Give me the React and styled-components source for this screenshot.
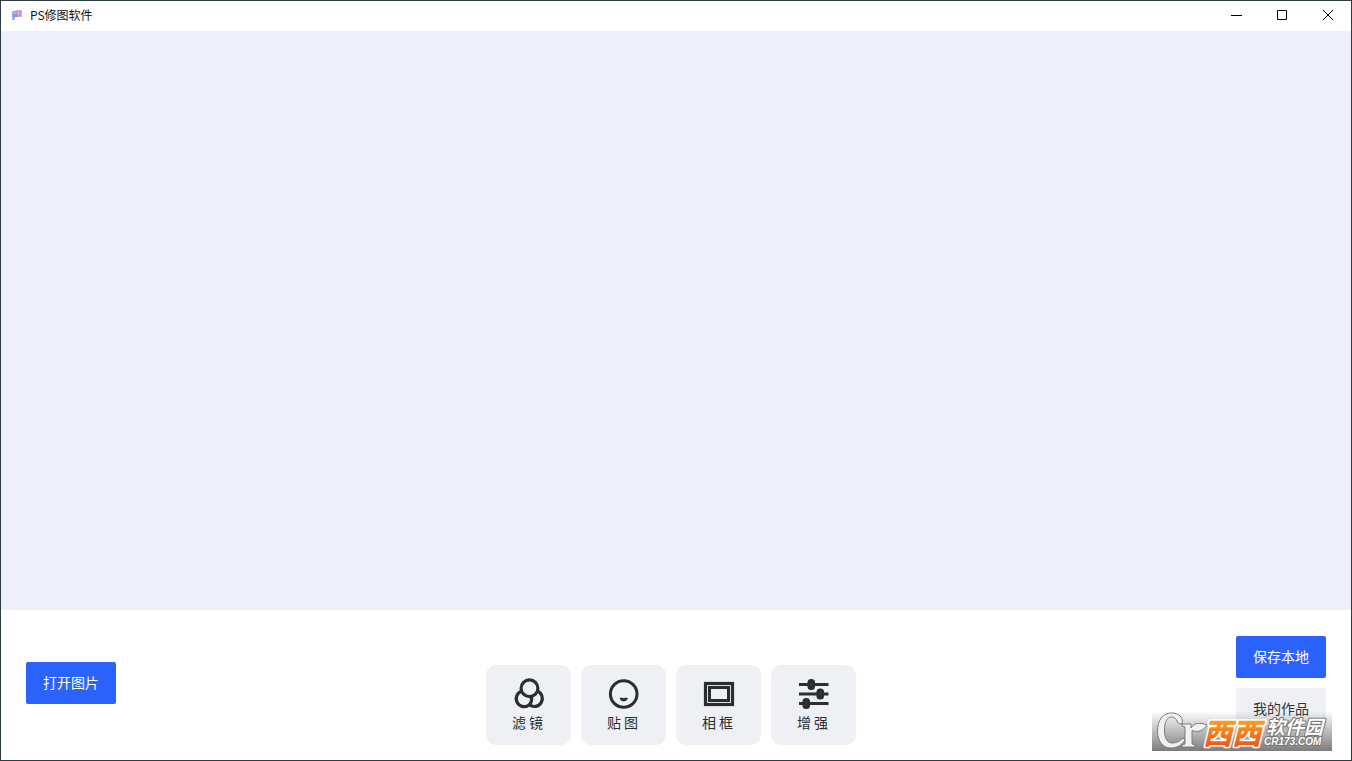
import React from "react";
import styled, { createGlobalStyle } from "styled-components";

const GlobalStyle = createGlobalStyle`
  * { box-sizing: border-box; }
  body { margin: 0; }
  body, button {
    font-family: "Noto Sans CJK SC", sans-serif;
  }
`;

const Window = styled.div`
  position: relative;
  display: flex;
  flex-direction: column;
  min-height: 100vh;
  border: 1px solid #2b3d40;
  background: #fff;
`;

const TitleBar = styled.header`
  display: flex;
  align-items: center;
  height: 30px;
  padding: 0 0 2px 10px;
`;

const Title = styled.h1`
  flex: 1;
  margin: 0 0 0 7px;
  font-size: 12px;
  line-height: 18px;
  font-weight: 400;
  color: #111;
`;

const CaptionButton = styled.button`
  display: flex;
  align-items: center;
  justify-content: center;
  width: 46px;
  height: 28px;
  padding: 0;
  border: 0;
  background: none;
`;

const Stage = styled.main`
  flex: 1;
  background: #efeff9;
`;

const Footer = styled.footer`
  display: grid;
  grid-template-columns: 1fr auto 1fr;
  height: 150px;
  padding: 0 25px;
`;

const Side = styled.div`
  display: flex;
  flex-direction: column;
  justify-content: center;
  align-items: ${(p) => (p.$end ? "flex-end" : "flex-start")};
  gap: 10px;
  padding-bottom: 4px;
`;

const ActionButton = styled.button`
  width: 90px;
  height: 42px;
  padding: 0 0 2px;
  border: 0;
  border-radius: 2px;
  font-size: 14px;
  line-height: 20px;
  color: ${(p) => (p.$primary ? "#fff" : "#333")};
  background: ${(p) => (p.$primary ? "#2b62fb" : "#eff0f3")};
`;

const Tools = styled.nav`
  display: flex;
  align-items: flex-end;
  gap: 10px;
  padding: 0 10px 15px 0;
`;

const ToolButton = styled.button`
  display: flex;
  flex-direction: column;
  align-items: center;
  width: 85px;
  height: 80px;
  padding: 13px 0 0;
  border: 0;
  border-radius: 10px;
  background: #eff0f3;
  color: #2a2c30;
  font-size: 14px;
  line-height: 20px;
`;

const ToolIcon = styled.svg`
  width: 32px;
  height: 32px;
  margin-bottom: 2px;
`;

const ToolLabel = styled.span`
  padding-right: 2px;
`;

const Brand = styled.div`
  position: absolute;
  right: 19px;
  bottom: 9px;
  width: 180px;
  height: 40px;
  background: linear-gradient(rgba(110, 110, 110, 0), rgba(110, 110, 110, 0.9));
`;

const BrandArt = styled.svg`
  display: block;
  width: 180px;
  height: 40px;

  text {
    font-style: italic;
    paint-order: stroke;
    stroke-linejoin: round;
  }
`;

const stroke = { fill: "none", stroke: "#2b2d30", strokeWidth: 3 };

const tools = [
  {
    name: "滤 镜",
    icon: (
      <g {...stroke} strokeWidth="3.2">
        <path d="M8.4 13.2A8 8 0 1 0 16.400 26.800C18.200 25 19 22.500 18.600 19" />
        <path d="M24.600 13.2A8 8 0 1 1 16.400 26.800" />
        <circle cx="16.500" cy="10.300" r="8.4" />
      </g>
    ),
  },
  {
    name: "贴 图",
    icon: (
      <g {...stroke}>
        <circle cx="15.700" cy="16" r="13.3" />
        <path
          d="M12 20.200Q14 19.800 15.700 20.600Q17.500 19.800 19.500 20.200Q18.700 23 15.700 23Q12.700 23 12 20.200Z"
          fill="#2b2d30"
          strokeWidth="0.8"
          strokeLinejoin="round"
        />
      </g>
    ),
  },
  {
    name: "相 框",
    icon: (
      <g {...stroke}>
        <rect x="2.500" y="5.500" width="27" height="21" strokeWidth="3.200" />
        <rect x="6.500" y="9.500" width="19" height="13" />
      </g>
    ),
  },
  {
    name: "增 强",
    icon: (
      <g {...stroke}>
        <path d="M1 6.500h29.500M1 16h29.500M1 25.500h29.500" />
        <g fill="#2b2d30" stroke="none">
          <rect x="9.500" y="1" width="7.500" height="11" rx="3.5" />
          <rect x="18.500" y="10.500" width="7.500" height="11" rx="3.5" />
          <rect x="4.500" y="20" width="7.500" height="11" rx="3.5" />
        </g>
        <path d="M13.250 5.500v2M22.250 15v2M8.250 24.500v2" stroke="#45474b" strokeWidth="1" />
      </g>
    ),
  },
];

export default function App() {
  return (
    <Window>
      <GlobalStyle />
      <TitleBar>
        <svg width="12" height="12" viewBox="0 0 12 12" aria-hidden="true">
          <rect x="1" y="2" width="3" height="3" rx="1" fill="#a9a3e0" />
          <rect x="4" y="1" width="3" height="4" rx="1" fill="#c59bdc" />
          <rect x="7" y="1" width="4" height="4" rx="1.5" fill="#dc92c8" />
          <rect x="1" y="5" width="3" height="3" fill="#8f9be4" />
          <rect x="4" y="5" width="3" height="3" fill="#9c88d6" />
          <rect x="7" y="5" width="4" height="3" rx="1.5" fill="#c88fd6" />
          <rect x="1" y="8" width="3" height="3" rx="1" fill="#78bdea" />
        </svg>
        <Title>PS修图软件</Title>
        <CaptionButton aria-label="最小化">
          <svg width="12" height="12" stroke="#000" fill="none"><path d="M1 6.500h11" /></svg>
        </CaptionButton>
        <CaptionButton aria-label="最大化">
          <svg width="12" height="12" stroke="#000" fill="none"><path d="M1.500 1.500h9v9h-9z" /></svg>
        </CaptionButton>
        <CaptionButton aria-label="关闭">
          <svg width="12" height="12" stroke="#000" fill="none"><path d="M1 1l10 10M11 1L1 11" /></svg>
        </CaptionButton>
      </TitleBar>
      <Stage />
      <Footer>
        <Side>
          <ActionButton $primary>打开图片</ActionButton>
        </Side>
        <Tools>
          {tools.map((tool) => (
            <ToolButton key={tool.name}>
              <ToolIcon viewBox="0 0 32 32" aria-hidden="true">{tool.icon}</ToolIcon>
              <ToolLabel>{tool.name}</ToolLabel>
            </ToolButton>
          ))}
        </Tools>
        <Side $end>
          <ActionButton $primary>保存本地</ActionButton>
          <ActionButton>我的作品</ActionButton>
        </Side>
      </Footer>
      <Brand>
        <BrandArt viewBox="0 0 180 40">
          <defs>
            <linearGradient id="brandOrange" x1="0" y1="0" x2="0" y2="1">
              <stop offset="0.2" stopColor="#fba51f" />
              <stop offset="0.9" stopColor="#ee5418" />
            </linearGradient>
          </defs>
          <g fill="#f1f1f1" stroke="#7c7c7c" strokeLinejoin="round">
            <path d="M30 12.500C28 13.500 26 12.500 25 10C24 7.500 22 6 19.500 6C14.500 6 12.500 12 12.500 19C12.500 27 15 32 20 32C25 32 28 30 31 27L33 29C30 34 25 37 18.500 37C11 37 5.500 30 5.500 20C5.500 9 11 2 19.500 2C26 2 32 6 30 12.500Z" />
            <path d="M30 13H39V17C42 12 48 11 55 14C52 19 47 22 40 19.500V33L43 34V36H30V34L33 33V16L30 15Z" />
          </g>
          <text x="51" y="33" fontSize="29" fontWeight="900" fill="url(#brandOrange)" stroke="#fff" strokeWidth="3">西西</text>
          <text x="114" y="23" fontSize="19" fontWeight="700" fill="#fff" stroke="#777" strokeWidth="2">软件园</text>
          <text x="112" y="34" fontSize="10" fontWeight="700" fontFamily="Liberation Sans, sans-serif" fill="#fff" stroke="#777" strokeWidth="2">CR173.COM</text>
        </BrandArt>
      </Brand>
    </Window>
  );
}
